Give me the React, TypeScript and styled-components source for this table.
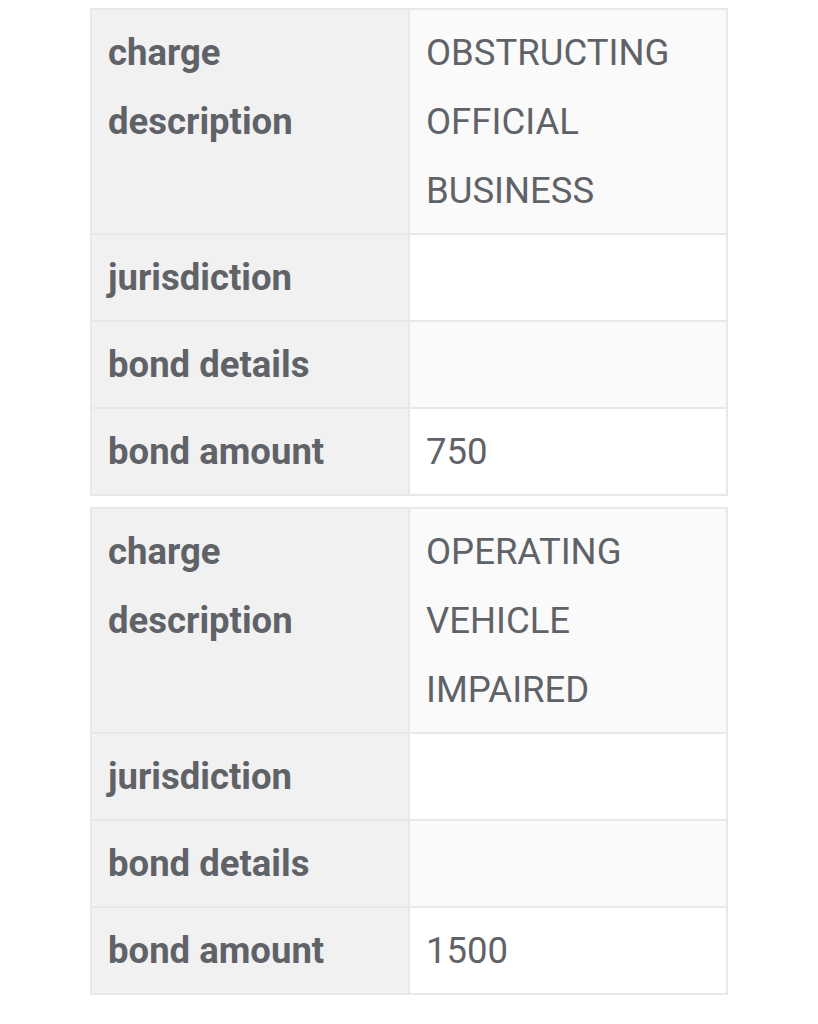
import React from "react";
import styled, { createGlobalStyle } from "styled-components";

const Global = createGlobalStyle`
  body {
    margin: 8px 0;
    background: #ffffff;
    font-family: Roboto, "Liberation Sans", Arial, sans-serif;
  }
`;

const Wrap = styled.div`
  width: 638px;
  margin: 0 auto;
  display: flex;
  flex-direction: column;
  gap: 11px;
`;

const Table = styled.table`
  width: 100%;
  border-collapse: collapse;
  table-layout: fixed;
  border: 2px solid #e8e8e8;
`;

const Col = styled.col`
  width: 50%;
`;

const Row = styled.tr<{ $alt: boolean }>`
  background: ${(p) => (p.$alt ? "#fafafa" : "#ffffff")};
`;

const Label = styled.th`
  background: #f1f1f1;
  border: 2px solid #e8e8e8;
  padding: 8px 16px;
  text-align: left;
  vertical-align: top;
  font-weight: 700;
  font-size: 36.5px;
  line-height: 69px;
  color: #5f6368;
`;

const Value = styled.td`
  border: 2px solid #e8e8e8;
  padding: 8px 16px;
  text-align: left;
  vertical-align: top;
  font-weight: 400;
  font-size: 36.5px;
  line-height: 69px;
  color: #5f6368;
`;

type Charge = { description: string; amount: string };

const charges: Charge[] = [
  { description: "OBSTRUCTING OFFICIAL BUSINESS", amount: "750" },
  { description: "OPERATING VEHICLE IMPAIRED", amount: "1500" },
];

export default function App() {
  return (
    <>
      <Global />
      <Wrap>
        {charges.map((c, i) => {
          const rows: [string, string][] = [
            ["charge description", c.description],
            ["jurisdiction", ""],
            ["bond details", ""],
            ["bond amount", c.amount],
          ];
          return (
            <Table key={i}>
              <colgroup>
                <Col />
                <Col />
              </colgroup>
              <tbody>
                {rows.map(([k, v], j) => (
                  <Row key={k} $alt={j % 2 === 0}>
                    <Label>{k}</Label>
                    <Value>{v}</Value>
                  </Row>
                ))}
              </tbody>
            </Table>
          );
        })}
      </Wrap>
    </>
  );
}
